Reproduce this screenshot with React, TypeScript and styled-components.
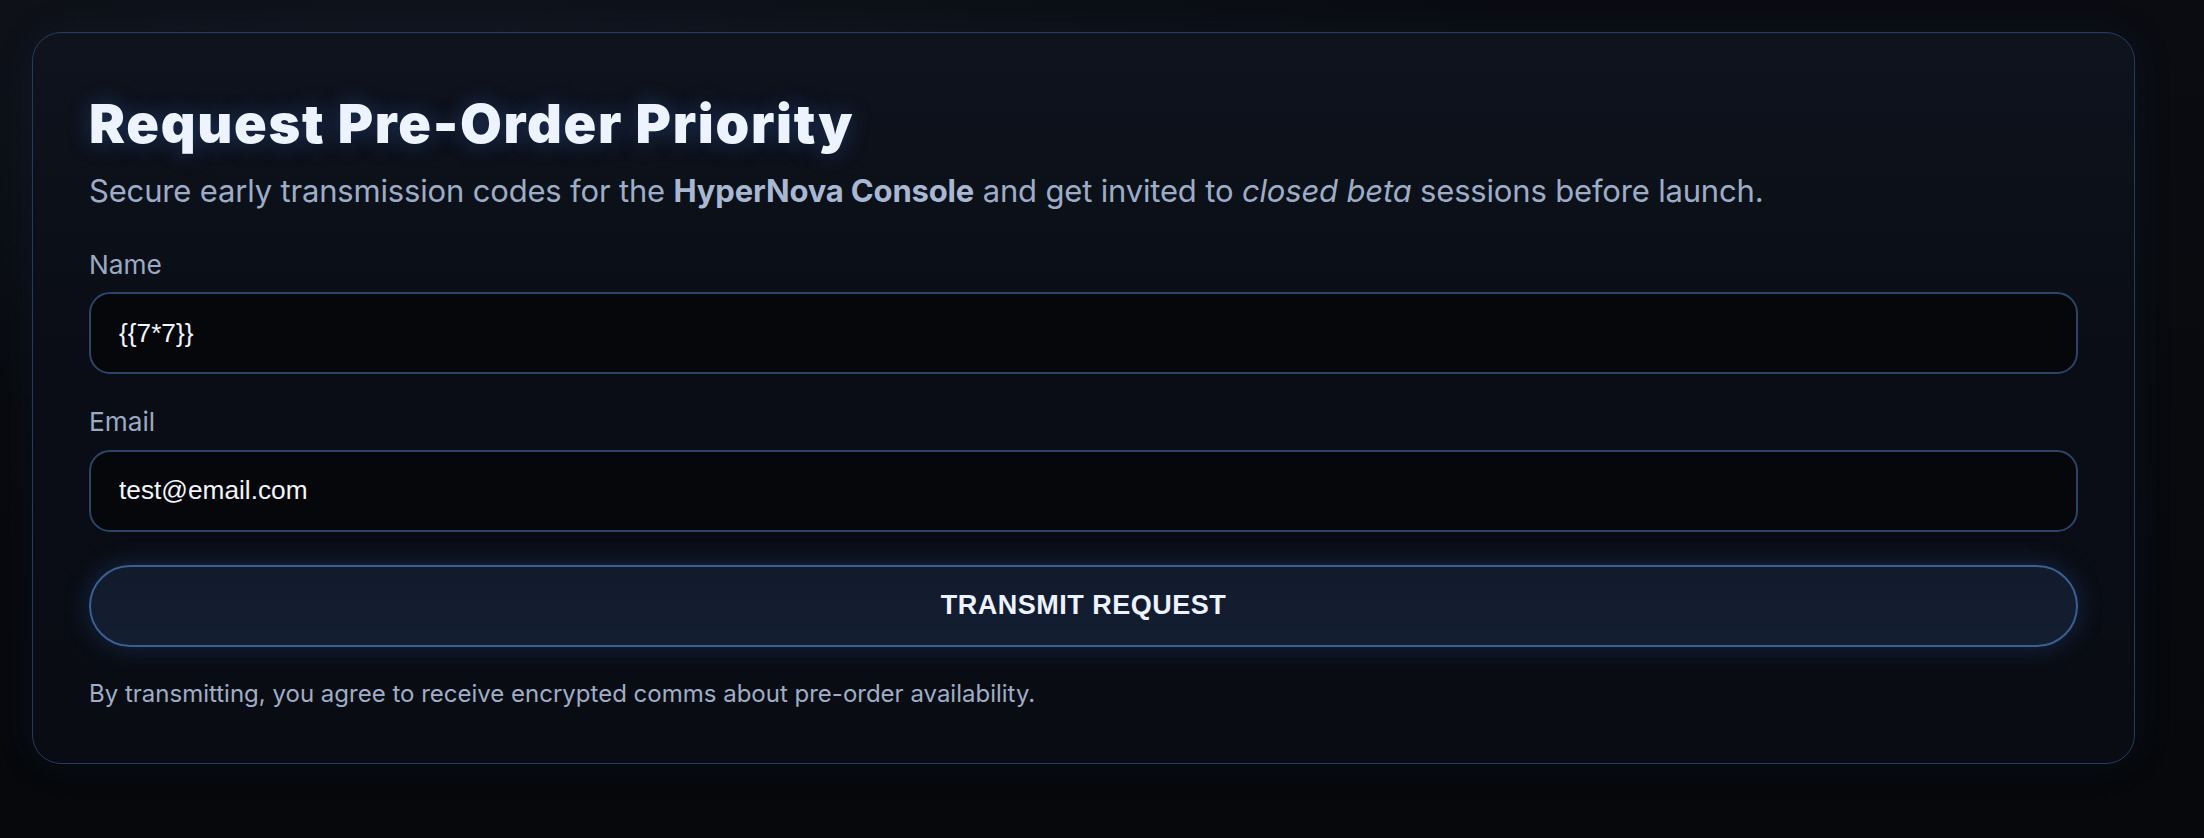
import React from "react";
import styled, { createGlobalStyle } from "styled-components";

const GlobalStyle = createGlobalStyle`
  html, body {
    margin: 0;
    padding: 0;
    background: #07090d;
  }
  body {
    min-height: 838px;
    font-family: Inter, "Noto Sans", "Liberation Sans", sans-serif;
    background:
      radial-gradient(ellipse 70% 60% at 20% 10%, rgba(22, 28, 40, 0.55), transparent 70%),
      linear-gradient(180deg, #0a0c11 0%, #06080b 100%);
  }
  * { box-sizing: border-box; }
`;

const Page = styled.main`
  padding: 32px 0 0 32px;
  min-height: 838px;
`;

const Card = styled.section`
  width: 2103px;
  display: flex;
  flex-direction: column;
  padding: 60.5px 56px 53px;
  border: 1.5px solid #243b60;
  border-radius: 29px;
  background: linear-gradient(180deg, #0e131d 0%, #0a0d15 45%, #090c13 100%);
  box-shadow: 0 0 40px rgba(30, 60, 110, 0.12), inset 0 1px 0 rgba(90, 130, 200, 0.05);
`;

const Title = styled.h1`
  margin: 0;
  font-family: Inter, "Noto Sans", sans-serif;
  font-size: 54px;
  line-height: 60px;
  font-weight: 900;
  letter-spacing: 1.7px;
  color: #edf3ff;
  text-shadow: 0 0 22px rgba(70, 120, 220, 0.35);
`;

const Subtitle = styled.p`
  margin: 15px 0 0;
  font-family: Inter, "Noto Sans", sans-serif;
  font-size: 31px;
  line-height: 44px;
  font-weight: 400;
  letter-spacing: -0.17px;
  color: #9dadc8;

  strong {
    font-weight: 700;
    color: #a9b8d2;
  }
  em {
    font-style: italic;
  }
`;

const Form = styled.form`
  display: flex;
  flex-direction: column;
  gap: 30px;
  margin-top: 34px;
`;

const Field = styled.label`
  display: flex;
  flex-direction: column;
  gap: 9.5px;
`;

const LabelText = styled.span`
  font-family: Inter, "Noto Sans", sans-serif;
  font-size: 26.25px;
  line-height: 36px;
  color: #9aaac4;
`;

const Input = styled.input`
  height: 82px;
  width: 100%;
  padding: 0 28px;
  border: 2px solid #2a4568;
  border-radius: 21px;
  background: #05070b;
  color: #f2f5fc;
  font-family: "Liberation Sans", Arial, sans-serif;
  font-size: 26.25px;
  outline: none;
`;

const Button = styled.button`
  margin-top: 3px;
  height: 82.5px;
  width: 100%;
  border: 2px solid #3a5f93;
  border-radius: 999px;
  background: linear-gradient(180deg, #121b2c 0%, #131e31 100%);
  color: #ecf2ff;
  font-family: "Liberation Sans", Arial, sans-serif;
  font-weight: 700;
  font-size: 27px;
  letter-spacing: 0.5px;
  text-transform: uppercase;
  box-shadow: 0 0 26px rgba(50, 100, 180, 0.32);
  cursor: pointer;
`;

const Footnote = styled.p`
  margin: 1px 0 0;
  font-family: Inter, "Noto Sans", sans-serif;
  font-size: 24px;
  line-height: 32px;
  color: #9fadc6;
`;

export default function App() {
  return (
    <>
      <GlobalStyle />
      <Page>
        <Card>
          <Title>Request Pre-Order Priority</Title>
          <Subtitle>
            Secure early transmission codes for the <strong>HyperNova Console</strong> and get invited to{" "}
            <em>closed beta</em> sessions before launch.
          </Subtitle>
          <Form onSubmit={(e) => e.preventDefault()}>
            <Field>
              <LabelText>Name</LabelText>
              <Input type="text" defaultValue="{{7*7}}" />
            </Field>
            <Field>
              <LabelText>Email</LabelText>
              <Input type="email" defaultValue="test@email.com" />
            </Field>
            <Button type="submit">Transmit Request</Button>
            <Footnote>By transmitting, you agree to receive encrypted comms about pre-order availability.</Footnote>
          </Form>
        </Card>
      </Page>
    </>
  );
}
